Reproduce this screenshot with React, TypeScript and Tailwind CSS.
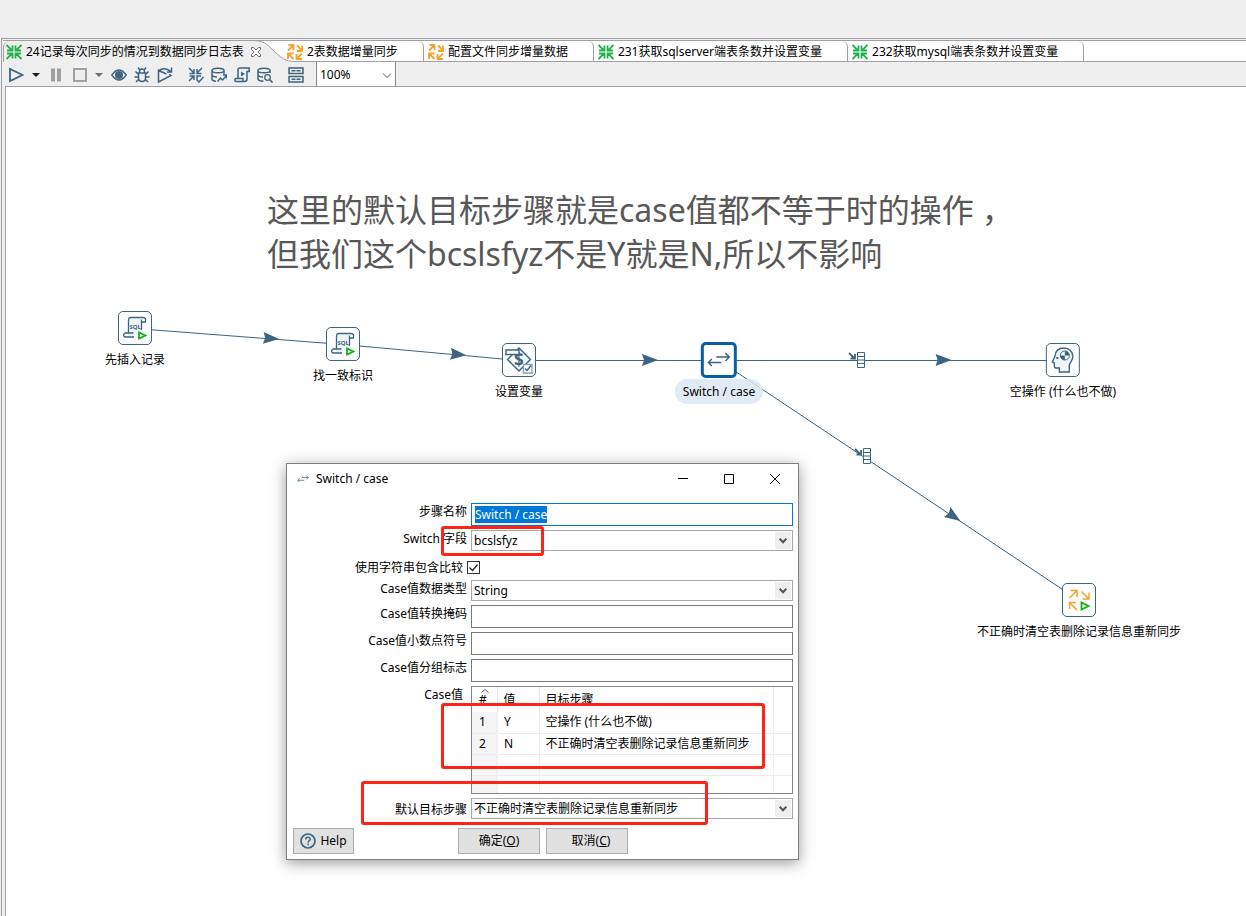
import { useEffect, useRef } from "react";
import type { ReactNode } from "react";

interface IconProps {
  className?: string;
}

const ConvergeIcon = ({ className = "" }: IconProps) => (
  <svg viewBox="0 0 16 16" className={className} fill="none" stroke="currentColor" strokeWidth={1.8}>
    <path d="M.5 1l5.500 5.500M6.500 1.500v5H1M15.500 1L10 6.500M9.500 1.500v5H15M.5 15L6 9.500M6.500 14.500v-5H1M15.500 15L10 9.500M9.500 14.500v-5H15" />
  </svg>
);

const CycleIcon = ({ className = "" }: IconProps) => (
  <svg viewBox="0 0 16 16" className={className} fill="none" stroke="currentColor" strokeWidth={1.8}>
    <path d="M1 6.500L6 1.500M1.500 1h5v5M10 1.500l5 5M15 1.500V7h-5M6.500 15L1.500 10M1 15V9.500h5.500M15 9.500l-5 5M9.500 10v5H15" />
  </svg>
);

const SwapIcon = ({ className = "", strokeWidth = 1.4 }: IconProps & { strokeWidth?: number }) => (
  <svg viewBox="0 0 24 24" className={className} fill="none" stroke="currentColor" strokeWidth={strokeWidth}>
    <path d="M9.500 9h13M18.500 5l4 4-4 4M14.500 14.500h-13M5 11l-3.500 3.500L5 18" />
  </svg>
);

const SqlIcon = () => (
  <svg viewBox="0 0 24 24" className="size-6" fill="none" stroke="#3d6480" strokeWidth={1.3}>
    <path d="M6 2h12v18H6z" fill="#eef6fc" stroke="none" />
    <path d="M5.500 17V4.500Q5.500 1.500 8 1.500H20q2.500 0 2.500 2V6H18.500V3.500M18.500 6v8M11 21H2.500Q.7 21 .7 19.200T2.500 17H10.500" />
    <text x="6.500" y="12.500" fontSize="6" fontWeight="700" fill="#3d6480" stroke="none">
      SQL
    </text>
    <path d="M16 16.500v6l6.500-3z" stroke="#14b214" strokeWidth={1.8} fill="#fff" />
  </svg>
);

const VariableIcon = () => (
  <svg viewBox="0 0 28 28" className="size-7" fill="none" stroke="#3d6480" strokeWidth={1.4}>
    <path d="M14 2l11.500 11.500L14 25 2.500 13.500z" fill="#f4f9fd" />
    <text x="9" y="20" fontSize="17" fontWeight="700" fill="#3d6480" stroke="none">
      $
    </text>
    <path d="M1 4h13v4.500H1z" fill="#fff" />
    <path d="M18.500 18.500h8.500v8.500h-8.500z" fill="#fff" stroke="#8ba2b2" />
    <path d="M20 22.500l2 2 4-5" />
  </svg>
);

const HeadIcon = () => (
  <svg viewBox="0 0 26 28" className="h-7 w-[26px]" fill="none" stroke="#3d6480" strokeWidth={1.4}>
    <path
      d="M9.500 26v-4H6q-1.500 0-1.500-2v-3L2.500 16 5 10.500C5.500 5 9 2 14 2c5.500 0 9 4 9 8.500 0 4-3 6-3.500 8.500v7z"
      fill="#eef6fc"
    />
    <circle cx="15" cy="9.500" r="4.500" fill="#fff" stroke="none" />
    <path d="M15 9.500V5A4.500 4.500 0 0 1 19.500 9.500zM15 9.500V14A4.500 4.500 0 0 1 10.500 9.500z" fill="#3d6480" stroke="none" />
    <circle cx="15" cy="9.500" r="4.500" strokeWidth={1} />
    <path d="M6.500 12H8.500" strokeWidth={2} />
  </svg>
);

const JobIcon = () => (
  <svg viewBox="0 0 24 24" className="size-6" fill="none" stroke="#f8a12c" strokeWidth={1.5}>
    <path d="M2.500 10l7-7M3.500 2.500H10V9M14.500 3.500l7 7M22 4.500V11h-6.500M10 22l-7-7M2.500 21v-6.500H9" />
    <path d="M14.500 14.500v7l7-3.500z" stroke="#14b214" strokeWidth={1.8} />
  </svg>
);

const Caret = () => <path d="M1 6h8L5 10z" fill="currentColor" stroke="none" />;

interface Tool {
  label: string;
  className: string;
  art: ReactNode;
}

const tools: Tool[] = [
  { label: "Run", className: "w-4 text-[#3d6480]", art: <path d="M2 2v12l12.500-6z" strokeWidth={1.8} /> },
  { label: "Run options", className: "w-[10px] text-[#1a1a1a]", art: <Caret /> },
  { label: "Pause", className: "w-4 text-[#a0a0a0]", art: <path d="M5 1.500v13M11 1.500v13" strokeWidth={4} /> },
  { label: "Stop", className: "w-4 text-[#a0a0a0]", art: <path d="M3 2h12v12H3z" strokeWidth={2} /> },
  { label: "Stop options", className: "w-[10px] text-[#707070]", art: <Caret /> },
  {
    label: "Preview",
    className: "w-4 text-[#3d6480]",
    art: (
      <>
        <path d="M.8 8q7.200-10 14.400 0-7.200 10-14.400 0z" strokeWidth={1.4} />
        <circle cx="8" cy="8" r="4" fill="currentColor" stroke="none" />
      </>
    ),
  },
  {
    label: "Debug",
    className: "w-4 text-[#3d6480]",
    art: (
      <path
        d="M4.500 6h7v5q0 3.500-3.500 3.500T4.500 11zM5.500 6V4.500a2.500 2.500 0 0 1 5 0V6M5.500 2.500L4 .5M10.500 2.500L12 .5M4.500 7.500l-3-3M11.500 7.500l3-3M4.500 10H.5M11.500 10h4M5 12l-3 3M11 12l3 3"
        strokeWidth={1.5}
      />
    ),
  },
  {
    label: "Replay",
    className: "w-4 text-[#3d6480]",
    art: <path d="M9.500 7L1.500 3.500V15L14 8.500l-2-1M1.500 3.500Q8-.5 14 4.500M14.500.5v4.500H10" strokeWidth={1.5} />,
  },
  {
    label: "Verify",
    className: "ml-2 w-4 text-[#3d6480]",
    art: (
      <path
        d="M1 1l5 5M6 2v4.500H1.500M14 1L9 6M9 2v4.500h4.500M1 14l5-5M6 13V9H1.500M13 9H9v3.500M8.500 12.500L11 15l4.500-5"
        strokeWidth={1.5}
      />
    ),
  },
  {
    label: "Impact analysis",
    className: "w-4 text-[#3d6480]",
    art: (
      <path
        d="M1 3.500C1 .5 13 .5 13 3.500s-12 3-12 0V12q0 2 4 2.200M1 8q1 2 5 2M13 3.500V7M6.500 14.500l3-3.500 2 2 4-4.500M12 8h3.500v3.500"
        strokeWidth={1.5}
      />
    ),
  },
  {
    label: "Generate SQL",
    className: "w-4 text-[#3d6480]",
    art: (
      <>
        <path d="M4 11V3q0-2 2-2h9.200v3.500H13V12q0 2.500-2.500 2.500H2Q.8 14.500.8 13T2 11.500H9V14" strokeWidth={1.5} />
        <path d="M7 4.500v5L11 7z" fill="currentColor" stroke="none" />
      </>
    ),
  },
  {
    label: "Explore database",
    className: "w-4 text-[#3d6480]",
    art: (
      <>
        <path d="M1 3.500C1 .5 13 .5 13 3.500s-12 3-12 0V12q0 2 5.500 2.200M1 8q1 2 5 2M13 3.500V6" strokeWidth={1.5} />
        <circle cx="10.500" cy="10.500" r="2.800" strokeWidth={1.3} />
        <path d="M12.500 12.500L15.500 15.500" strokeWidth={1.6} />
      </>
    ),
  },
  {
    label: "Show results",
    className: "ml-2 w-4 text-[#3d6480]",
    art: <path d="M1 1h14v5.500H1zM1 9.500h14V15H1zM3.500 3.700h4M8.500 3.700h4M3.500 12.200h4M8.500 12.200h4" strokeWidth={1.5} />,
  },
];

interface Step {
  name: string;
  x: number;
  y: number;
  icon: ReactNode;
  selected?: boolean;
}

const steps: Step[] = [
  { name: "先插入记录", x: 129, y: 241, icon: <SqlIcon /> },
  { name: "找一致标识", x: 337, y: 257, icon: <SqlIcon /> },
  { name: "设置变量", x: 513, y: 273, icon: <VariableIcon /> },
  { name: "Switch / case", x: 713, y: 273, icon: <SwapIcon className="size-6 text-[#3d6480]" />, selected: true },
  { name: "空操作 (什么也不做)", x: 1057, y: 273, icon: <HeadIcon /> },
  { name: "不正确时清空表删除记录信息重新同步", x: 1073, y: 513, icon: <JobIcon /> },
];

// [from, to, copies rows]
const hops: [number, number, boolean][] = [
  [0, 1, false],
  [1, 2, false],
  [2, 3, false],
  [3, 4, true],
  [3, 5, true],
];

const Hops = () => (
  <svg className="absolute inset-0 size-full" stroke="#3d6480">
    {hops.map(([from, to, copies]) => {
      const a = steps[from];
      const b = steps[to];
      const dx = b.x - a.x;
      const dy = b.y - a.y;
      const angle = (Math.atan2(dy, dx) * 180) / Math.PI;
      return (
        <g key={`${from}-${to}`}>
          <line x1={a.x} y1={a.y + 0.5} x2={b.x} y2={b.y + 0.5} />
          <path
            d="M-7-6L9 0-7 6-5 0z"
            fill="#3d6480"
            stroke="none"
            transform={`translate(${a.x + dx * 0.65} ${a.y + dy * 0.65}) rotate(${angle})`}
          />
          {copies && (
            <g transform={`translate(${Math.round(a.x + dx * 0.4) - 8} ${Math.round(a.y + dy * 0.4) - 8})`}>
              <path d="M8.500.5h7v15h-7zM8.500 4.500h7M8.500 8h7M8.500 11.500h7" fill="#fff" />
              <path d="M0 1l5 5M6 2v4.500H1.500" fill="none" strokeWidth={1.8} />
            </g>
          )}
        </g>
      );
    })}
  </svg>
);

const StepNode = ({ step }: { step: Step }) => (
  <div
    className="absolute flex w-max -translate-x-1/2 flex-col items-center"
    style={{ left: step.x, top: step.y - 18 }}
  >
    <div
      className={`flex items-center justify-center rounded-[5px] bg-white ${
        step.selected ? "size-9 border-3 border-[#0a5ea8]" : "my-px size-[34px] border border-[#3d6480]"
      }`}
    >
      {step.icon}
    </div>
    <span
      className={`mt-px flex h-[25px] items-center ${step.selected ? "rounded-full bg-[#dce8f4]/85 px-2" : ""}`}
    >
      {step.name}
    </span>
  </div>
);

const tabs = [
  { title: "2表数据增量同步", job: true },
  { title: "配置文件同步增量数据", job: true },
  { title: "231获取sqlserver端表条数并设置变量", job: false },
  { title: "232获取mysql端表条数并设置变量", job: false },
];

const TabBar = () => (
  <div className="ml-px flex h-[22px] border-y border-[#a0a0a5] bg-white" role="tablist">
    <button
      role="tab"
      aria-selected
      className="relative -mb-px flex w-[280px] items-center rounded-tl-md border-l border-[#a0a0a5] bg-[#efefef] pl-[2px] whitespace-nowrap"
    >
      <svg viewBox="0 0 42 22" className="absolute -top-px -right-3 h-[22px] w-[42px]">
        <path d="M0 0H42V22H0z" fill="#fff" />
        <path d="M0 .5C14 .5 17 8 23 13s9 8.500 19 8.500V22H0z" fill="#efefef" />
        <path d="M0 .5h42M0 .5C14 .5 17 8 23 13s9 8.500 19 8.500" fill="none" stroke="#a0a0a5" />
      </svg>
      <ConvergeIcon className="mr-1 size-4 shrink-0 text-[#22b14c]" />
      24记录每次同步的情况到数据同步日志表
      <svg viewBox="0 0 12 12" className="relative ml-[6px] size-3" fill="#fff" stroke="#666">
        <path d="M1.500 1.500h2L6 4l2.500-2.500h2v2L8 6l2.500 2.500v2h-2L6 8l-2.500 2.500h-2v-2L4 6 1.500 3.500z" />
      </svg>
    </button>
    {tabs.map((tab) => (
      <button
        key={tab.title}
        role="tab"
        aria-selected={false}
        className="relative flex items-center gap-1 rounded-tr-md border-r border-[#a0a0a5] pt-px pr-[25px] pl-1 whitespace-nowrap"
      >
        {tab.job ? (
          <CycleIcon className="size-4 text-[#f8a12c]" />
        ) : (
          <ConvergeIcon className="size-4 text-[#22b14c]" />
        )}
        {tab.title}
      </button>
    ))}
  </div>
);

const Toolbar = () => (
  <div className="flex h-6 items-center gap-[7px] pl-[6px]">
    {tools.map((tool) => (
      <button key={tool.label} aria-label={tool.label} className={`mt-[2px] h-4 shrink-0 ${tool.className}`}>
        <svg
          viewBox={tool.className.includes("10px") ? "0 0 10 16" : "0 0 16 16"}
          className="h-4 w-full"
          fill="none"
          stroke="currentColor"
        >
          {tool.art}
        </svg>
      </button>
    ))}
    <div className="relative ml-[5px] h-6 w-20">
      <select
        aria-label="Zoom"
        className="size-full appearance-none border-x border-[#8a8a8a] bg-white pt-[2px] pl-[3px] text-[12px] outline-none"
      >
        <option>100%</option>
      </select>
      <svg viewBox="0 0 10 6" className="pointer-events-none absolute top-[11px] right-1 h-[6px] w-[10px]">
        <path d="M1 .5l4 4 4-4" fill="none" stroke="#555" />
      </svg>
    </div>
  </div>
);

interface FieldProps {
  id: string;
  label: string;
  className?: string;
  labelClass?: string;
  children: ReactNode;
}

const Field = ({ id, label, className = "mt-1", labelClass = "pr-1", children }: FieldProps) => (
  <div className={`flex ${className}`}>
    <label htmlFor={id} className={`flex-1 text-right leading-[18px] ${labelClass}`}>
      {label}
    </label>
    <div className="relative w-[322px]">{children}</div>
  </div>
);

const Combo = ({ id, value }: { id: string; value: string }) => (
  <>
    <select
      id={id}
      className="block h-[21px] w-full appearance-none border border-[#a8a8a8] bg-white pl-[2px] text-[12px] outline-none"
    >
      <option>{value}</option>
    </select>
    <span className="pointer-events-none absolute top-[2px] right-[2px] flex h-[17px] w-4 items-center justify-center bg-[#efefef]">
      <svg viewBox="0 0 8 6" className="h-[6px] w-2">
        <path d="M.7.700L4 4.200 7.300.7" fill="none" stroke="#555" strokeWidth={2} />
      </svg>
    </span>
  </>
);

const rows = [
  ["1", "Y", "空操作 (什么也不做)"],
  ["2", "N", "不正确时清空表删除记录信息重新同步"],
  ["", "", ""],
  ["", "", ""],
];

const textInput = "block h-[23px] w-full border border-[#7a7a7a] bg-white px-[3px] outline-none";
const dialogButton = "flex h-[26px] items-center justify-center border border-[#adadad] bg-[#e1e1e1]";
const marker = "pointer-events-none absolute rounded-[3px] border-3 border-[#ff2316]";

const SwitchCaseDialog = () => {
  const nameRef = useRef<HTMLInputElement>(null);

  useEffect(() => {
    nameRef.current?.focus({ preventScroll: true });
    nameRef.current?.select();
  }, []);

  return (
    <div
      role="dialog"
      aria-label="Switch / case"
      className="absolute top-[376px] left-[280px] w-[513px] border border-[#808080] bg-white shadow-[0_3px_14px_rgba(0,0,0,0.4)]"
    >
      <div className="flex h-[30px] items-center pl-[10px]">
        <SwapIcon className="size-3 text-[#6a8ba3]" strokeWidth={2} />
        <span className="ml-[7px] flex-1">Switch / case</span>
        <button aria-label="Minimize" className="flex w-[46px] justify-center">
          <svg viewBox="0 0 10 10" className="size-[10px]" stroke="#000">
            <path d="M0 4.500h10" />
          </svg>
        </button>
        <button aria-label="Maximize" className="flex w-[46px] justify-center">
          <svg viewBox="0 0 10 10" className="size-[10px]" fill="none" stroke="#000">
            <path d="M.5.5h9v9h-9z" />
          </svg>
        </button>
        <button aria-label="Close" className="flex w-[46px] justify-center">
          <svg viewBox="0 0 10 10" className="size-[10px]" stroke="#000">
            <path d="M0 0l10 10M10 0L0 10" />
          </svg>
        </button>
      </div>

      <form className="pt-[9px] pr-[5px] pb-[5px] pl-[6px]" onSubmit={(e) => e.preventDefault()}>
        <Field id="step-name" label="步骤名称" className="">
          <input
            id="step-name"
            ref={nameRef}
            defaultValue="Switch / case"
            className="block h-[23px] w-full border border-[#0078d7] bg-white px-[3px] outline-none selection:bg-[#0078d7] selection:text-white"
          />
        </Field>
        <Field id="switch-field" label="Switch 字段">
          <Combo id="switch-field" value="bcslsfyz" />
        </Field>
        <Field id="contains" label="使用字符串包含比较" className="mt-[10px] h-[13px] items-center" labelClass="pr-2">
          <input
            id="contains"
            type="checkbox"
            defaultChecked
            className="peer -ml-1 block size-[13px] appearance-none border border-[#333] bg-white"
          />
          <svg
            viewBox="0 0 13 13"
            className="pointer-events-none absolute top-0 -left-1 hidden size-[13px] peer-checked:block"
          >
            <path d="M2.500 6.500L5.500 9.500l5-6" fill="none" stroke="#222" strokeWidth={1.3} />
          </svg>
        </Field>
        <Field id="data-type" label="Case值数据类型" className="mt-[6px]">
          <Combo id="data-type" value="String" />
        </Field>
        <Field id="mask" label="Case值转换掩码">
          <input id="mask" className={textInput} />
        </Field>
        <Field id="decimal" label="Case值小数点符号">
          <input id="decimal" className={textInput} />
        </Field>
        <Field id="grouping" label="Case值分组标志">
          <input id="grouping" className={textInput} />
        </Field>
        <Field id="case-values" label="Case值" labelClass="pr-2">
          <div id="case-values" className="h-[108px] overflow-hidden border border-[#828790]">
            <table className="w-full table-fixed border-collapse text-left">
              <colgroup>
                <col className="w-[25px]" />
                <col className="w-[42px]" />
                <col className="w-[234px]" />
                <col />
              </colgroup>
              <thead>
                <tr className="h-[25px]">
                  <th className="relative border-r border-[#e5e5e5] p-0 pl-[7px] font-normal">
                    #
                    <svg viewBox="0 0 8 4" className="absolute top-[2px] left-[9px] h-1 w-2">
                      <path d="M.5 3.500L4 .5l3.500 3" fill="none" stroke="#555" />
                    </svg>
                  </th>
                  <th className="border-r border-[#e5e5e5] p-0 pl-[6px] font-normal">值</th>
                  <th className="border-r border-[#e5e5e5] p-0 pl-[6px] font-normal">目标步骤</th>
                  <th className="p-0" />
                </tr>
              </thead>
              <tbody>
                {rows.map(([index, value, target], i) => (
                  <tr key={i} className="h-[21px] border-b border-[#ececec]">
                    <td className="border-r-2 border-r-[#edf0f4] bg-[#f5f5f5] p-0 pl-[7px] leading-5">{index}</td>
                    <td className="border-r border-r-[#edf0f4] p-0 pl-[6px] leading-5">{value}</td>
                    <td className="border-r border-r-[#edf0f4] p-0 pl-[6px] leading-5">{target}</td>
                    <td className="p-0" />
                  </tr>
                ))}
              </tbody>
            </table>
          </div>
        </Field>
        <Field id="default-target" label="默认目标步骤" labelClass="self-end pr-1">
          <Combo id="default-target" value="不正确时清空表删除记录信息重新同步" />
        </Field>

        <div className="mt-[9px] flex gap-[6px]">
          <div className="flex flex-1">
            <button type="button" className={`w-[61px] gap-1 ${dialogButton}`}>
              <svg viewBox="0 0 16 16" className="size-4" fill="none" stroke="#3d6480" strokeWidth={1.7}>
                <circle cx="8" cy="8" r="7" />
                <path d="M5.800 6.500c0-3 4.500-2.800 4.500-.3 0 1.500-2.200 1.500-2.200 3.300M8.100 10.500v1.700" strokeWidth={1.5} />
              </svg>
              Help
            </button>
          </div>
          <button type="submit" className={`w-[82px] ${dialogButton}`}>
            确定(<u>O</u>)
          </button>
          <button type="button" className={`w-[82px] pl-2 ${dialogButton}`}>
            取消(<u>C</u>)
          </button>
          <div className="flex-1" />
        </div>
      </form>

      <span className={`top-[62px] left-[154px] h-[30px] w-[103px] ${marker}`} />
      <span className={`top-[239px] left-[154px] h-[66px] w-[324px] ${marker}`} />
      <span className={`top-[317px] left-[74px] h-[44px] w-[347px] ${marker}`} />
    </div>
  );
};

const App = () => {
  return (
    <div className="flex min-h-screen flex-col bg-[#efefef] pt-[38px] pl-px font-['Noto_Sans','Noto_Sans_CJK_SC',sans-serif] text-[12px] leading-[18px] text-black">
      <div className="flex flex-1 flex-col border-t border-l border-[#a0a0a5] pt-px">
        <TabBar />
        <Toolbar />
        <main className="relative ml-[3px] flex-1 overflow-hidden border-t border-l border-[#a0a0a5] bg-white">
          <p className="absolute top-[101px] left-[261px] text-[32px] leading-[44px] whitespace-nowrap text-[#585858]">
            这里的默认目标步骤就是case值都不等于时的操作<span className="ml-2">，</span>
            <br />
            但我们这个bcslsfyz不是Y就是N,所以不影响
          </p>
          <Hops />
          {steps.map((step) => (
            <StepNode key={step.name} step={step} />
          ))}
          <SwitchCaseDialog />
        </main>
      </div>
    </div>
  );
};

export default App;
